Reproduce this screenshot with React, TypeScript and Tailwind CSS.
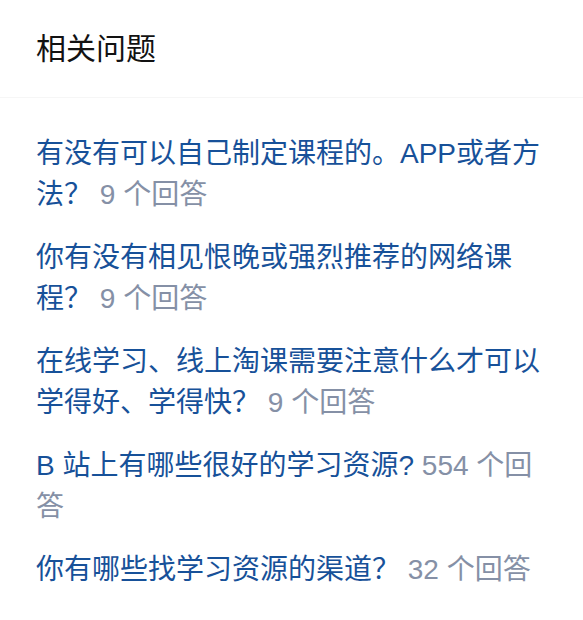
const questions = [
  { title: '有没有可以自己制定课程的。APP或者方法？', answers: 9 },
  { title: '你有没有相见恨晚或强烈推荐的网络课程？', answers: 9 },
  { title: '在线学习、线上淘课需要注意什么才可以学得好、学得快？', answers: 9 },
  { title: 'B 站上有哪些很好的学习资源?', answers: 554 },
  { title: '你有哪些找学习资源的渠道？', answers: 32 },
];

export default function App() {
  return (
    <div
      className="w-[583px] h-[620px] bg-white overflow-hidden"
      style={{ fontFamily: '"Liberation Sans", "Noto Sans CJK SC", sans-serif' }}
    >
      {/* Header */}
      <div className="h-[98px] flex items-center px-[36px] border-b border-[#f6f6f6]">
        <h2 className="text-[30px] leading-none font-normal text-[#121212]">相关问题</h2>
      </div>

      {/* Question list */}
      <div className="pt-[35px] pl-[36px] pr-[30px] flex flex-col gap-[22px]">
        {questions.map((q) => (
          <a key={q.title} href="#" className="block text-[28px] leading-[41px] text-[#175199]">
            {q.title} <span className="text-[#8590a6]">{q.answers} 个回答</span>
          </a>
        ))}
      </div>
    </div>
  );
}
